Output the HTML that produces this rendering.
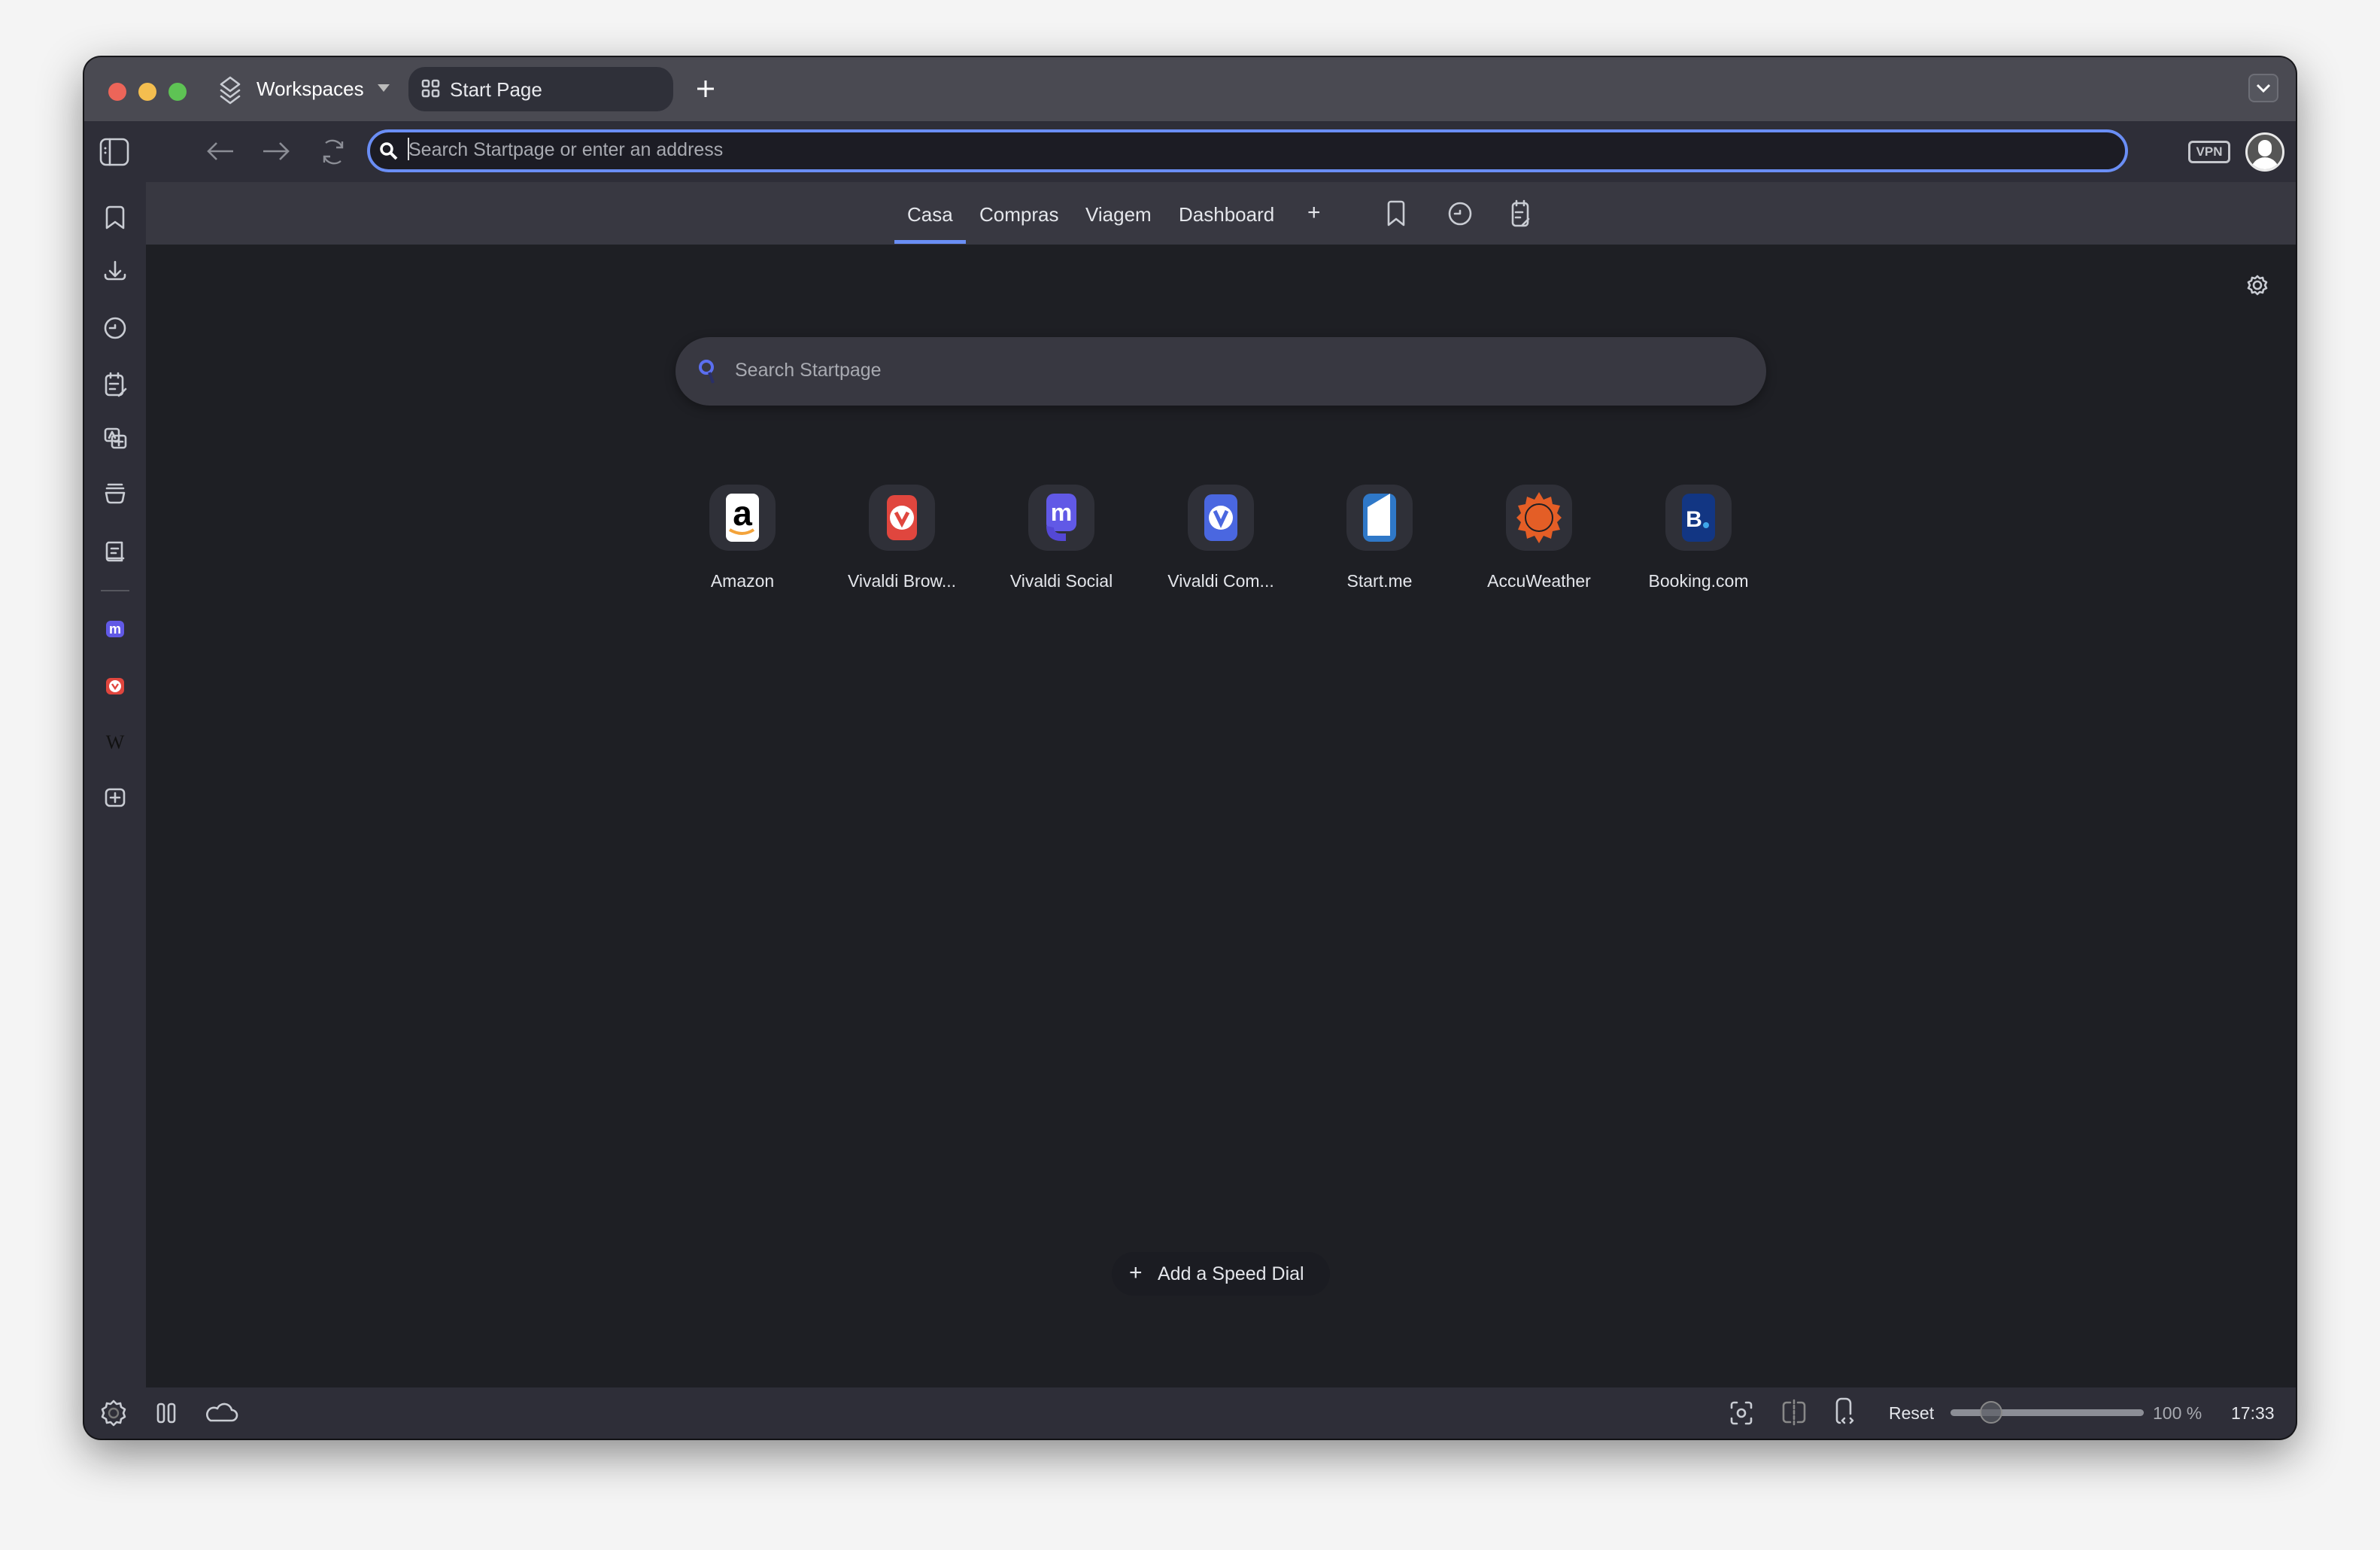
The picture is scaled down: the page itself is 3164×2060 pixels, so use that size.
<!DOCTYPE html>
<html><head><meta charset="utf-8"><style>
*{margin:0;padding:0;box-sizing:border-box}
body{width:3164px;height:2060px;background:#f4f4f4;position:relative;overflow:hidden;font-family:"Liberation Sans",sans-serif;color:#e4e6eb}
.a{position:absolute}
#win{left:112px;top:76px;width:2940px;height:1836px;border-radius:22px;overflow:hidden;background:#1e1f24;box-shadow:0 20px 60px rgba(0,0,0,.45),0 0 0 2px #1a1a1e}
.ic{stroke:#c9ccd3;fill:none;stroke-width:2.6;stroke-linecap:round;stroke-linejoin:round}
.t{font-size:26px;white-space:nowrap}
.tile{position:absolute;top:568px;width:88px;height:88px;border-radius:26px;background:#2f3038}
.lb{position:absolute;top:683px;width:220px;text-align:center;font-size:23px;white-space:nowrap}
</style></head><body>
<div id="win" class="a">
 <div class="a" style="left:0;top:0;width:2940px;height:85px;background:#4a4a52"></div>
 <div class="a" style="left:32px;top:34px;width:24px;height:24px;border-radius:50%;background:#ec6559"></div>
 <div class="a" style="left:72px;top:34px;width:24px;height:24px;border-radius:50%;background:#f4be4f"></div>
 <div class="a" style="left:112px;top:34px;width:24px;height:24px;border-radius:50%;background:#5ec354"></div>
 <svg class="a" style="left:176px;top:24px" width="36" height="40" viewBox="0 0 36 40"><path class="ic" d="M18 3 L30 12 L18 21 L6 12 Z M6 20 L18 29 L30 20 M6 28 L18 37 L30 28"/></svg>
 <div class="a t" style="left:229px;top:27px;color:#fff">Workspaces</div>
 <div class="a" style="left:390px;top:36px;border-left:8px solid transparent;border-right:8px solid transparent;border-top:10px solid #bbb"></div>
 <div class="a" style="left:431px;top:13px;width:352px;height:59px;border-radius:22px;background:#2f3039"></div>
 <svg class="a" style="left:448px;top:29px" width="26" height="26" viewBox="0 0 26 26"><g class="ic" stroke-width="2.2"><rect x="2" y="2" width="8" height="8" rx="2"/><rect x="15" y="2" width="8" height="8" rx="2"/><rect x="2" y="15" width="8" height="8" rx="2"/><rect x="15" y="15" width="8" height="8" rx="2"/></g></svg>
 <div class="a t" style="left:486px;top:28px;color:#e8e9ed">Start Page</div>
 <svg class="a" style="left:813px;top:29px" width="26" height="26"><path d="M13 2v22M2 13h22" stroke="#fff" stroke-width="3"/></svg>
 <div class="a" style="left:2877px;top:22px;width:40px;height:38px;border-radius:8px;border:2px solid #6d6e76;background:#55565e"></div>
 <svg class="a" style="left:2885px;top:30px" width="24" height="22"><path d="M4 7l8 8 8-8" stroke="#fff" stroke-width="3" fill="none"/></svg>
 <div class="a" style="left:0;top:85px;width:2940px;height:81px;background:#2e2e38"></div>
 <svg class="a" style="left:20px;top:107px" width="40" height="38"><rect x="2" y="2" width="36" height="34" rx="7" class="ic"/><path class="ic" d="M14 2v34"/><circle cx="8" cy="14" r="1.5" fill="#c9ccd3"/><circle cx="8" cy="20" r="1.5" fill="#c9ccd3"/></svg>
 <svg class="a" style="left:162px;top:110px" width="38" height="30"><path d="M36 15H3M14 4L3 15l11 11" stroke="#8b8d95" stroke-width="2.6" fill="none"/></svg>
 <svg class="a" style="left:236px;top:110px" width="38" height="30"><path d="M2 15h33M24 4l11 11-11 11" stroke="#8b8d95" stroke-width="2.6" fill="none"/></svg>
 <svg class="a" style="left:313px;top:106px" width="36" height="40"><path d="M8 8a14 14 0 0 1 22 6M28 32a14 14 0 0 1-22-6M30 6v8h-8M6 34v-8h8" stroke="#8b8d95" stroke-width="2.4" fill="none"/></svg>
 <div class="a" style="left:376px;top:96px;width:2341px;height:57px;border-radius:29px;border:4px solid #6a8ef5;background:#1c1c24"></div>
 <svg class="a" style="left:392px;top:112px" width="26" height="26"><circle cx="10" cy="10" r="7" stroke="#fff" stroke-width="3.5" fill="none"/><path d="M15 15l8 8" stroke="#fff" stroke-width="4"/></svg>
 <div class="a" style="left:430px;top:107px;width:2px;height:30px;background:#ddd"></div>
 <div class="a t" style="left:431px;top:109px;color:#a8aab1;font-size:25px">Search Startpage or enter an address</div>
 <div class="a" style="left:2797px;top:111px;width:56px;height:30px;border:3px solid #c4c6cc;border-radius:6px;font-size:17px;font-weight:bold;color:#c4c6cc;text-align:center;line-height:24px">VPN</div>
 <div class="a" style="left:2873px;top:100px;width:52px;height:52px;border-radius:50%;border:3px solid #e8e8e8;background:#555;overflow:hidden">
  <div class="a" style="left:14px;top:7px;width:18px;height:22px;border-radius:9px;background:#fff"></div>
  <div class="a" style="left:4px;top:30px;width:38px;height:26px;border-radius:19px 19px 0 0;background:#fff"></div>
 </div>
 <div class="a" style="left:0;top:166px;width:82px;height:1602px;background:#2e2e38"></div>
 <svg class="a" style="left:0;top:166px" width="82" height="900" viewBox="0 0 82 900">
  <g class="ic" stroke-width="2.4">
   <path d="M30 37a4 4 0 0 1 4-4h14a4 4 0 0 1 4 4v24l-11-8-11 8z"/>
   <path d="M41 106v18M34 118l7 7 7-7M28 123v2a4 4 0 0 0 4 4h18a4 4 0 0 0 4-4v-2"/>
   <circle cx="41" cy="194" r="13"/><path d="M41 194h-7M41 194v-4"/>
   <rect x="29" y="257" width="22" height="26" rx="4"/><path d="M35 254v6M45 254v6M34 268h11M34 275h7M46 284l9-9"/>
   <rect x="28" y="328" width="18" height="16" rx="3"/><rect x="37" y="337" width="18" height="16" rx="3"/><path d="M33 340l4-8 4 8M41 345h10M46 342v8"/>
   <path d="M29 413h24l-2 10a4 4 0 0 1-4 3H35a4 4 0 0 1-4-3zM30 407h22M32 402h18"/>
   <path d="M32 479h18v24H33a3 3 0 0 1-3-3V482a3 3 0 0 1 3-3zM36 487h9M36 493h6M30 500h22"/>
   <rect x="29" y="807" width="24" height="22" rx="5"/><path d="M41 812v12M35 818h12"/>
  </g>
  <path d="M22 543h38" stroke="#55565e" stroke-width="2"/>
  <rect x="29" y="583" width="24" height="22" rx="6" fill="#6159e6"/><text x="41" y="600" font-size="18" font-weight="bold" fill="#fff" text-anchor="middle" font-family="Liberation Sans">m</text>
  <rect x="29" y="659" width="24" height="22" rx="6" fill="#e0463e"/><circle cx="41" cy="670" r="8" fill="#fff"/><path d="M37 667l4 6 4-6" stroke="#e0463e" stroke-width="2.4" fill="none"/>
  <text x="41" y="753" font-size="26" fill="#111" text-anchor="middle" font-family="Liberation Serif">W</text>
 </svg>
 <div class="a" style="left:82px;top:166px;width:2858px;height:83px;background:#383841"></div>
 <div class="a t" style="left:1094px;top:194px">Casa</div>
 <div class="a t" style="left:1190px;top:194px">Compras</div>
 <div class="a t" style="left:1331px;top:194px">Viagem</div>
 <div class="a t" style="left:1455px;top:194px">Dashboard</div>
 <div class="a t" style="left:1626px;top:190px;font-size:30px">+</div>
 <div class="a" style="left:1077px;top:243px;width:95px;height:5px;background:#6a8ef5"></div>
 <svg class="a" style="left:1724px;top:186px" width="200" height="44"><g class="ic" stroke-width="2.4">
  <path d="M13 6h14a3 3 0 0 1 3 3v28l-10-8-10 8V9a3 3 0 0 1 3-3z"/>
  <circle cx="105" cy="22" r="14"/><path d="M105 22h-7M105 22v-4"/>
  <rect x="175" y="8" width="20" height="30" rx="4"/><path d="M180 5v6M190 5v6M179 20h9M179 27h6M188 37l8-8"/>
 </g></svg>
 <svg class="a" style="left:2874px;top:288px" width="30" height="30"><circle cx="15" cy="15" r="5" class="ic" stroke-width="2"/><path class="ic" stroke-width="2" d="M15 3l3 3 4-1 1 4 4 2-2 4 2 4-4 2-1 4-4-1-3 3-3-3-4 1-1-4-4-2 2-4-2-4 4-2 1-4 4 1z"/></svg>
 <div class="a" style="left:786px;top:372px;width:1450px;height:91px;border-radius:46px;background:#383841;box-shadow:0 4px 14px rgba(0,0,0,.35)"></div>
 <svg class="a" style="left:816px;top:400px" width="30" height="36"><circle cx="11" cy="12" r="8" stroke="#5b6ff0" stroke-width="4" fill="none"/><path d="M15 19l5 14" stroke="#2a2f66" stroke-width="4"/></svg>
 <div class="a t" style="left:865px;top:402px;color:#a8aab1;font-size:25px">Search Startpage</div>
 <div class="tile" style="left:831px"></div>
 <div class="tile" style="left:1043px"></div>
 <div class="tile" style="left:1255px"></div>
 <div class="tile" style="left:1467px"></div>
 <div class="tile" style="left:1678px"></div>
 <div class="tile" style="left:1890px"></div>
 <div class="tile" style="left:2102px"></div>
 <svg class="a" style="left:0;top:0" width="2400" height="760">
  <rect x="853" y="580" width="44" height="64" rx="8" fill="#fff"/><text x="875" y="622" font-size="46" font-weight="bold" text-anchor="middle" font-family="Liberation Sans" fill="#000">a</text><path d="M858 628q17 10 32 0" stroke="#f3a33a" stroke-width="4" fill="none"/>
  <rect x="1067" y="582" width="40" height="60" rx="10" fill="#e0463e"/><circle cx="1087" cy="612" r="16" fill="#fff"/><path d="M1079 605l8 15 8-15" stroke="#e0463e" stroke-width="5" fill="none"/>
  <rect x="1279" y="580" width="40" height="50" rx="10" fill="#6159e6"/><path d="M1279 623q0 20 20 20h6v-10h-6q-10 0-10-8z" fill="#5448d6"/><text x="1299" y="616" font-size="32" font-weight="bold" text-anchor="middle" fill="#fff" font-family="Liberation Sans">m</text>
  <rect x="1489" y="581" width="44" height="62" rx="10" fill="#4a67e0"/><circle cx="1511" cy="612" r="16" fill="#fff"/><path d="M1503 603l8 17 8-17" stroke="#4a67e0" stroke-width="5" fill="none"/>
  <rect x="1700" y="580" width="44" height="64" rx="10" fill="#2f78c8"/><path d="M1706 598l30-18v56h-30z" fill="#fff"/>
  <g transform="translate(1934,612)"><polygon points="0,-34 6,-24 16,-28 18,-18 28,-16 24,-6 30,0 24,6 28,16 18,18 16,28 6,24 0,34 -6,24 -16,28 -18,18 -28,16 -24,6 -30,0 -24,-6 -28,-16 -18,-18 -16,-28 -6,-24" fill="#e45e26"/><circle r="18" fill="#e45e26" stroke="#1e1f24" stroke-width="2"/></g>
  <rect x="2124" y="580" width="44" height="64" rx="10" fill="#123683"/><text x="2140" y="624" font-size="30" font-weight="bold" text-anchor="middle" fill="#fff" font-family="Liberation Sans">B</text><circle cx="2156" cy="622" r="4" fill="#3fa6ea"/>
 </svg>
 <div class="lb" style="left:765px">Amazon</div>
 <div class="lb" style="left:977px">Vivaldi Brow...</div>
 <div class="lb" style="left:1189px">Vivaldi Social</div>
 <div class="lb" style="left:1401px">Vivaldi Com...</div>
 <div class="lb" style="left:1612px">Start.me</div>
 <div class="lb" style="left:1824px">AccuWeather</div>
 <div class="lb" style="left:2036px">Booking.com</div>
 <div class="a" style="left:1366px;top:1588px;width:290px;height:58px;border-radius:29px;background:#1b1c22"></div>
 <div class="a t" style="left:1389px;top:1599px;font-size:30px;font-weight:300">+</div>
 <div class="a t" style="left:1427px;top:1603px;font-size:25px">Add a Speed Dial</div>
 <div class="a" style="left:0;top:1768px;width:2940px;height:68px;background:#2e2e38"></div>
 <svg class="a" style="left:0;top:1768px" width="120" height="68"><circle cx="39" cy="34" r="6" stroke="#777" stroke-width="2.4" fill="none"/><path class="ic" stroke-width="2.4" d="M39 18l4 4 5-1 1 5 5 3-2 5 2 5-5 3-1 5-5-1-4 4-4-4-5 1-1-5-5-3 2-5-2-5 5-3 1-5 5 1z"/></svg>
 <svg class="a" style="left:96px;top:1785px" width="120" height="34"><g class="ic" stroke-width="2.4"><rect x="2" y="5" width="8" height="24" rx="3"/><rect x="16" y="5" width="8" height="24" rx="3"/><path d="M72 27h28a7 7 0 0 0 0-14 10 10 0 0 0-19-2 8 8 0 0 0-9 16z"/></g></svg>
 <svg class="a" style="left:2183px;top:1784px" width="40" height="40"><g class="ic" stroke-width="2.4"><path d="M7 11V7a3 3 0 0 1 3-3h4M26 4h4a3 3 0 0 1 3 3v4M33 25v4a3 3 0 0 1-3 3h-4M14 32h-4a3 3 0 0 1-3-3v-4"/><circle cx="20" cy="18" r="5"/></g></svg>
 <svg class="a" style="left:2253px;top:1783px" width="40" height="40"><g class="ic" stroke-width="2.4"><path d="M15 5h-5a4 4 0 0 0-4 4v18a4 4 0 0 0 4 4h5M25 5h5a4 4 0 0 1 4 4v18a4 4 0 0 1-4 4h-5" stroke="#888"/><path d="M20 2v34" stroke="#888" stroke-dasharray="4 3"/></g></svg>
 <svg class="a" style="left:2324px;top:1781px" width="40" height="42"><g class="ic" stroke-width="2.4"><path d="M10 34a4 4 0 0 1-4-4V8a6 6 0 0 1 6-6h6a6 6 0 0 1 6 6v14M16 28l-3 3 3 3M24 28l3 3-3 3"/></g></svg>
 <div class="a t" style="left:2399px;top:1789px;font-size:23px">Reset</div>
 <div class="a" style="left:2481px;top:1797px;width:257px;height:9px;border-radius:5px;background:#8c8e96"></div>
 <div class="a" style="left:2520px;top:1786px;width:30px;height:30px;border-radius:50%;border:2px solid #888;background:rgba(90,92,100,.7)"></div>
 <div class="a t" style="left:2750px;top:1789px;font-size:23px;color:#a8aab1">100 %</div>
 <div class="a t" style="left:2854px;top:1789px;font-size:23px">17:33</div>
</div>
</body></html>
